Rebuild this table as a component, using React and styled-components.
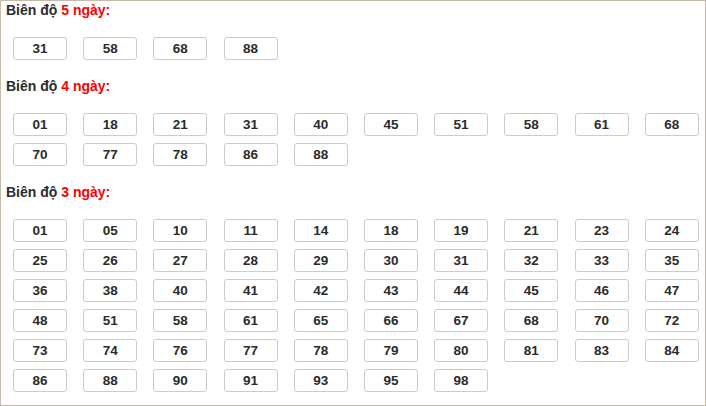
import React from "react"
import styled, { createGlobalStyle } from "styled-components"

const GlobalStyle = createGlobalStyle`
  html, body {
    margin: 0;
    padding: 0;
    background: #ffffff;
  }
  body {
    font-family: "Liberation Sans", Arial, sans-serif;
  }
`

const Panel = styled.div`
  box-sizing: border-box;
  width: 706px;
  height: 406px;
  border: 1px solid #c6baac;
  padding: 2px 0 0 0;
  background: #ffffff;
  overflow: hidden;
`

const Section = styled.section`
  & + & {
    margin-top: 19px;
  }
`

const Heading = styled.div`
  padding-left: 5px;
  font-size: 14px;
  line-height: 15px;
  font-weight: bold;
  color: #2b2b2b;
`

const Days = styled.span`
  color: #ff0000;
`

const NumberGrid = styled.div`
  display: grid;
  grid-template-columns: repeat(10, 54px);
  column-gap: 16.2px;
  row-gap: 7px;
  margin: 19px 0 0 12px;
`

const Ball = styled.div`
  box-sizing: border-box;
  height: 23px;
  border: 1px solid #cccccc;
  border-radius: 3px;
  display: flex;
  align-items: center;
  justify-content: center;
  font-size: 13.5px;
  font-weight: bold;
  color: #2b2b2b;
`

const sections = [
  { days: 5, numbers: ["31", "58", "68", "88"] },
  {
    days: 4,
    numbers: ["01", "18", "21", "31", "40", "45", "51", "58", "61", "68", "70", "77", "78", "86", "88"],
  },
  {
    days: 3,
    numbers: [
      "01", "05", "10", "11", "14", "18", "19", "21", "23", "24",
      "25", "26", "27", "28", "29", "30", "31", "32", "33", "35",
      "36", "38", "40", "41", "42", "43", "44", "45", "46", "47",
      "48", "51", "58", "61", "65", "66", "67", "68", "70", "72",
      "73", "74", "76", "77", "78", "79", "80", "81", "83", "84",
      "86", "88", "90", "91", "93", "95", "98",
    ],
  },
]

const App = () => {
  return (
    <>
      <GlobalStyle />
      <Panel>
        {sections.map(section => (
          <Section key={section.days}>
            <Heading>
              Biên độ <Days>{section.days} ngày:</Days>
            </Heading>
            <NumberGrid>
              {section.numbers.map(n => (
                <Ball key={n}>{n}</Ball>
              ))}
            </NumberGrid>
          </Section>
        ))}
      </Panel>
    </>
  )
}

export default App
